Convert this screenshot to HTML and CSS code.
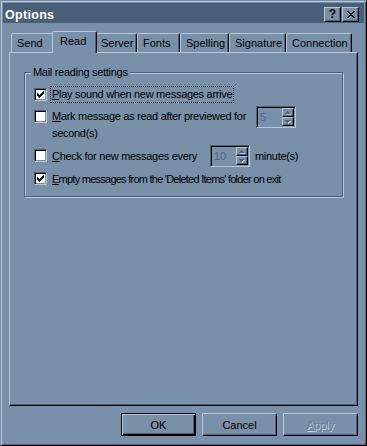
FILE: index.html
```html
<!DOCTYPE html>
<html>
<head>
<meta charset="utf-8">
<title>Options</title>
<link rel="stylesheet" href="styles.css">
</head>
<body>
<div class="window">
  <div class="titlebar">
    <span class="title">Options</span>
    <div class="caption-btns">
      <div class="cbtn help">?</div>
      <div class="cbtn close">
        <svg width="8" height="7" viewBox="0 0 8 7" shape-rendering="crispEdges"><path fill="#000" d="M0 0h2v1H0zM6 0h2v1H6zM1 1h2v1H1zM5 1h2v1H5zM2 2h4v1H2zM3 3h2v1H3zM2 4h4v1H2zM1 5h2v1H1zM5 5h2v1H5zM0 6h2v1H0zM6 6h2v1H6z"/></svg>
      </div>
    </div>
  </div>
  <div class="content">
    <div class="tabs">
      <div class="tab t-send">Send</div>
      <div class="tab t-read selected">Read</div>
      <div class="tab t-server">Server</div>
      <div class="tab t-fonts">Fonts</div>
      <div class="tab t-spelling">Spelling</div>
      <div class="tab t-signature">Signature</div>
      <div class="tab t-connection">Connection</div>
    </div>
    <div class="panel">
      <div class="group">
        <span class="legend">Mail reading settings</span>
        <div class="row row1">
          <span class="cb"><svg width="7" height="7" viewBox="0 0 7 7" shape-rendering="crispEdges"><path fill="#000" d="M0 2h1v3H0zM1 3h1v3H1zM2 4h1v3H2zM3 3h1v3H3zM4 2h1v3H4zM5 1h1v3H5zM6 0h1v3H6z"/></svg></span>
          <span class="label focus"><u>P</u>lay sound when new messages arrive</span>
        </div>
        <div class="row row2">
          <span class="cb"></span>
          <span class="label lbl-mark"><u>M</u>ark message as read after previewed for<br>second(s)</span>
          <div class="spin">
            <span class="val">5</span>
            <div class="arrows">
              <span class="ab"><svg width="6" height="4" viewBox="0 0 6 4" shape-rendering="crispEdges"><path fill="#b8c8d8" d="M3 1h1v1H3zM2 2h3v1H2zM1 3h5v1H1z"/><path fill="#4c6078" d="M2 0h1v1H2zM1 1h3v1H1zM0 2h5v1H0z"/></svg></span>
              <span class="ab"><svg width="6" height="4" viewBox="0 0 6 4" shape-rendering="crispEdges"><path fill="#b8c8d8" d="M1 1h5v1H1zM2 2h3v1H2zM3 3h1v1H3z"/><path fill="#4c6078" d="M0 0h5v1H0zM1 1h3v1H1zM2 2h1v1H2z"/></svg></span>
            </div>
          </div>
        </div>
        <div class="row row3">
          <span class="cb"></span>
          <span class="label lbl-check"><u>C</u>heck for new messages every</span>
          <div class="spin">
            <span class="val">10</span>
            <div class="arrows">
              <span class="ab"><svg width="6" height="4" viewBox="0 0 6 4" shape-rendering="crispEdges"><path fill="#b8c8d8" d="M3 1h1v1H3zM2 2h3v1H2zM1 3h5v1H1z"/><path fill="#4c6078" d="M2 0h1v1H2zM1 1h3v1H1zM0 2h5v1H0z"/></svg></span>
              <span class="ab"><svg width="6" height="4" viewBox="0 0 6 4" shape-rendering="crispEdges"><path fill="#b8c8d8" d="M1 1h5v1H1zM2 2h3v1H2zM3 3h1v1H3z"/><path fill="#4c6078" d="M0 0h5v1H0zM1 1h3v1H1zM2 2h1v1H2z"/></svg></span>
            </div>
          </div>
          <span class="label lbl-min">minute(s)</span>
        </div>
        <div class="row row4">
          <span class="cb"><svg width="7" height="7" viewBox="0 0 7 7" shape-rendering="crispEdges"><path fill="#000" d="M0 2h1v3H0zM1 3h1v3H1zM2 4h1v3H2zM3 3h1v3H3zM4 2h1v3H4zM5 1h1v3H5zM6 0h1v3H6z"/></svg></span>
          <span class="label lbl-empty"><u>E</u>mpty messages from the 'Deleted Items' folder on exit</span>
        </div>
      </div>
    </div>
    <div class="buttons">
      <div class="btn default">OK</div>
      <div class="btn">Cancel</div>
      <div class="btn disabled"><u>A</u>pply</div>
    </div>
  </div>
</div>
</body>
</html>
```
FILE: styles.css
```css
* { box-sizing: border-box; }
html, body { margin: 0; padding: 0; background: #7890a8; }
body {
  font-family: "Liberation Sans", Arial, sans-serif;
  font-size: 11px;
  color: #000;
}
.window {
  width: 367px;
  height: 446px;
  background: #7890a8;
  border: 1px solid;
  border-color: #7890a8 #000 #000 #7890a8;
  box-shadow: inset 1px 1px 0 #b8c8d8, inset -1px -1px 0 #4c6078;
  padding: 2px;
  display: flex;
  flex-direction: column;
}
.titlebar {
  height: 20px;
  background: #4a6078;
  display: flex;
  align-items: flex-start;
  justify-content: space-between;
}
.title {
  color: #fff;
  font-weight: bold;
  font-size: 12.5px;
  line-height: 16px;
  padding: 4px 0 0 2px;
  letter-spacing: 0.3px;
}
.caption-btns {
  display: flex;
  gap: 1px;
  margin: 4px 5px 0 0;
}
.cbtn {
  width: 17px;
  height: 15px;
  background: #7890a8;
  border: 1px solid;
  border-color: #b8c8d8 #000 #000 #b8c8d8;
  box-shadow: inset -1px -1px 0 #4c6078;
  display: flex;
  align-items: center;
  justify-content: center;
}
.cbtn.help {
  font-weight: bold;
  font-size: 12px;
  line-height: 12px;
  padding-bottom: 1px;
}
.content {
  flex: 1;
  padding: 8px 6px 0 6px;
  display: flex;
  flex-direction: column;
}
.tabs {
  height: 21px;
  display: flex;
  align-items: flex-end;
  padding-left: 2px;
}
.tab {
  height: 19px;
  border: 1px solid;
  border-bottom: none;
  border-color: #b8c8d8 #000 transparent #b8c8d8;
  border-radius: 2px 2px 0 0;
  box-shadow: inset -1px 0 0 #4c6078;
  padding: 2px 0 0 5px;
  line-height: 14px;
  white-space: nowrap;
  background: #7890a8;
}
.tab.selected {
  height: 22px;
  margin: 0 -2px -1px -2px;
  padding-left: 7px;
  position: relative;
  z-index: 1;
}
.t-send { width: 43px; }
.t-read { width: 45px; }
.t-server { width: 42px; }
.t-fonts { width: 43px; }
.t-spelling { width: 49px; }
.t-signature { width: 57px; }
.t-connection { width: 66px; }
.panel {
  height: 354px;
  border: 1px solid;
  border-color: #b8c8d8 #000 #000 #b8c8d8;
  box-shadow: inset -1px -1px 0 #4c6078;
  padding: 19px 0 0 14px;
}
.group {
  position: relative;
  width: 319px;
  height: 125px;
  border: 1px solid #4c6078;
  box-shadow: inset 1px 1px 0 #b8c8d8, 1px 1px 0 #b8c8d8;
  padding: 0 0 0 9px;
  display: flex;
  flex-direction: column;
  letter-spacing: -0.3px;
}
.legend {
  position: absolute;
  left: 6px;
  top: -8px;
  padding: 0 2px;
  line-height: 14px;
  background: #7890a8;
}
.row {
  display: flex;
  align-items: flex-start;
}
.row1 { margin-top: 13px; }
.row2 { margin-top: 4px; }
.row3 { margin-top: 2px; }
.row4 { margin-top: 3px; }
.cb {
  width: 13px;
  height: 13px;
  flex: none;
  background: #fff;
  border: 1px solid;
  border-color: #4c6078 #b8c8d8 #b8c8d8 #4c6078;
  box-shadow: inset 1px 1px 0 #000, inset -1px -1px 0 #7890a8;
  display: flex;
  align-items: center;
  justify-content: center;
}
.row1 .cb { margin-top: 2px; }
.row2 .cb { margin-top: 3px; }
.row3 .cb { margin-top: 4px; }
.row4 .cb { margin-top: 2px; }
.label {
  border: 1px solid transparent;
  padding: 0 1px;
  margin-left: 3px;
  line-height: 17px;
  white-space: nowrap;
}
.label.focus {
  border: 1px dotted #000;
  line-height: 15px;
}
.label u { text-underline-offset: 1px; }
.lbl-mark { width: 206px; }
.row3 .lbl-check { width: 160px; margin-top: 2px; }
.lbl-min { margin-top: 2px; margin-left: 3px; }
.lbl-empty { letter-spacing: -0.75px; }
.spin {
  width: 40px;
  height: 22px;
  flex: none;
  border: 1px solid;
  border-color: #4c6078 #b8c8d8 #b8c8d8 #4c6078;
  box-shadow: inset 1px 1px 0 #000, inset -1px -1px 0 #7890a8;
  padding: 1px;
  display: flex;
  justify-content: space-between;
  letter-spacing: 0;
}
.row2 .spin { margin-top: -1px; }
.val {
  color: #52687f;
  padding: 1px 0 0 2px;
  line-height: 16px;
}
.arrows {
  width: 12px;
  display: flex;
  flex-direction: column;
}
.ab {
  height: 9px;
  background: #7890a8;
  border: 1px solid;
  border-color: #b8c8d8 #000 #000 #b8c8d8;
  box-shadow: inset -1px -1px 0 #4c6078;
  display: flex;
  align-items: center;
  justify-content: center;
}
.buttons {
  margin-top: 7px;
  display: flex;
  justify-content: flex-end;
  gap: 6px;
}
.btn {
  width: 75px;
  height: 23px;
  border: 1px solid;
  border-color: #b8c8d8 #000 #000 #b8c8d8;
  box-shadow: inset -1px -1px 0 #4c6078;
  display: flex;
  align-items: center;
  justify-content: center;
  line-height: 14px;
}
.btn.default {
  border-color: #000;
  box-shadow: inset 1px 1px 0 #b8c8d8, inset -1px -1px 0 #000, inset -2px -2px 0 #4c6078;
}
.btn.disabled {
  color: #6a8098;
  text-shadow: 1px 1px 0 #c0d0dc;
}
```
